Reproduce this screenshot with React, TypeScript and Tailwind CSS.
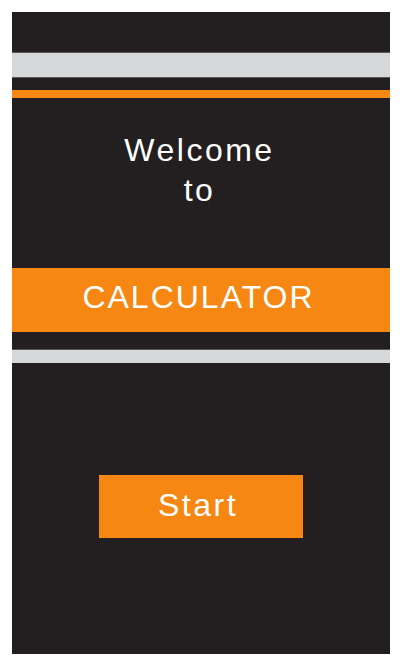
import React from 'react';

const App = () => {
    return (
        <div className="min-h-[666px] w-[402px] bg-white pt-[12px] px-[12px]" style={{ fontFamily: '"Liberation Sans", Arial, sans-serif' }}>
            <div className="h-[642px] w-[378px] bg-[#231f20] flex flex-col">
                {/* top stripes */}
                <div className="mt-[40px] h-[26px] bg-[#d6d7d9] border-y border-[#5a5a5c]" />
                <div className="mt-[12px] h-[8px] bg-[#f68712]" />

                {/* greeting */}
                <div className="mt-[32px] pr-[3px] text-white text-[32px] leading-[40px] tracking-[2.5px] text-center">
                    <div>Welcome</div>
                    <div>to</div>
                </div>

                {/* title band */}
                <div className="mt-[58px] h-[64px] bg-[#f68712] pt-[13px] pr-[5px] text-white text-[32px] leading-[32px] tracking-[2px] text-center">
                    CALCULATOR
                </div>
                <div className="mt-[17px] h-[14px] bg-[#d6d7d9] border-t border-[#5a5a5c]" />

                {/* start button */}
                <div className="mt-[112px] flex justify-center">
                    <button className="w-[204px] h-[63px] bg-[#f68712] pt-[14px] pr-[6px] text-white text-[32px] leading-[32px] tracking-[2.5px] flex justify-center items-start">
                        Start
                    </button>
                </div>
            </div>
        </div>
    );
};

export default App;
